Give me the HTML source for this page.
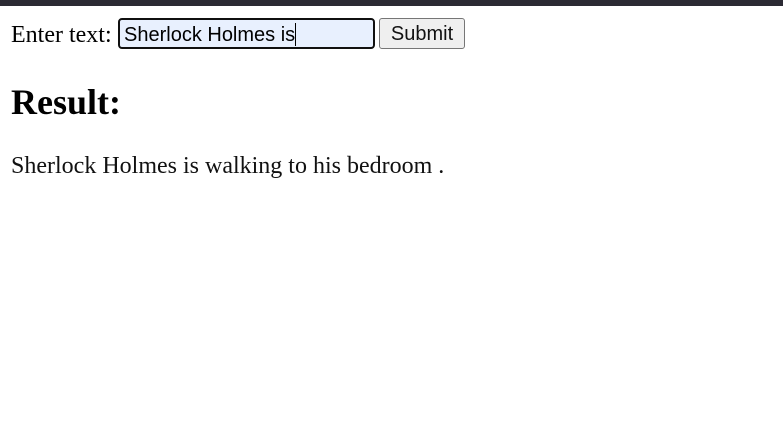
<!DOCTYPE html>
<html><head><style>
body{margin:0;width:783px;height:432px;background:#fff;position:relative;overflow:hidden;font-family:"Liberation Serif",serif;color:#000}
.bar{position:absolute;left:0;top:0;width:783px;height:6px;background:#2b2a33}
.lbl{position:absolute;left:11px;top:20px;font-size:24px;line-height:30px}
.inp{position:absolute;left:118px;top:18px;height:27px;border:2px solid #101010;border-radius:4px;background:#e8f0fe;font-family:"Liberation Sans",sans-serif;font-size:20px;line-height:30px;padding-left:4px;box-sizing:content-box;width:249px}
.cur{display:inline-block;width:1px;height:23px;background:#000;vertical-align:-5px}
.btn{position:absolute;left:379px;top:18px;width:84px;height:29px;border:1px solid #767676;border-radius:3px;background:#efefef;font-family:"Liberation Sans",sans-serif;font-size:20px;line-height:30px;text-align:center;color:#111}
h2{position:absolute;left:11px;top:82px;margin:0;font-size:36px;line-height:40px;font-weight:bold}
p{position:absolute;left:11px;top:151px;margin:0;font-size:24px;line-height:30px;color:#111}
</style></head><body>
<div class="bar"></div>
<div class="lbl">Enter text:</div>
<div class="inp">Sherlock Holmes is<span class="cur"></span></div>
<div class="btn">Submit</div>
<h2>Result:</h2>
<p>Sherlock Holmes is walking to his bedroom .</p>
</body></html>
